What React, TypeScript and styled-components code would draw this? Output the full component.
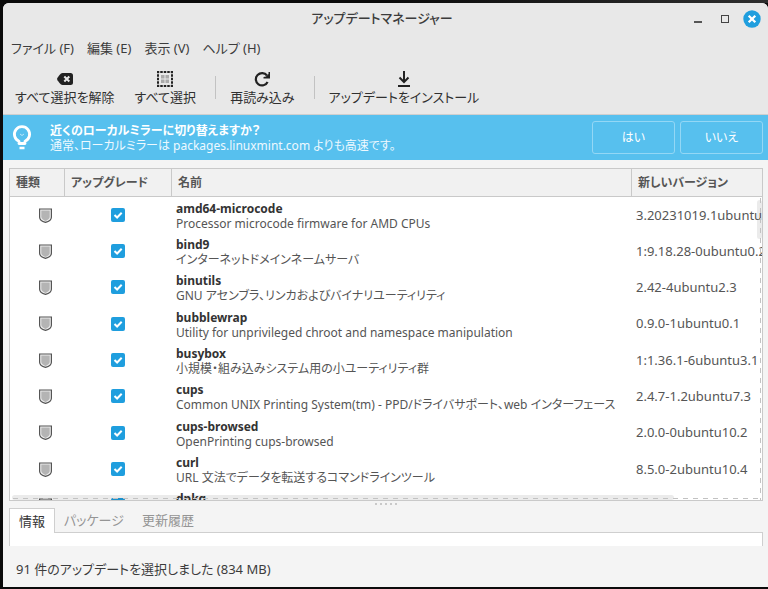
import React, { useState } from "react";
import styled, { createGlobalStyle, css } from "styled-components";

const GlobalStyle = createGlobalStyle`
  * { box-sizing: border-box; }
  body {
    margin: 0;
    background: #0d0d0d;
    color: #3c3c3c;
    font-family: "Noto Sans", "Noto Sans CJK JP", sans-serif;
    font-size: 12px;
    line-height: 15px;
    font-feature-settings: "palt";
  }
  button { font: inherit; font-feature-settings: inherit; color: inherit; border: 0; padding: 0; background: none; }
`;

const Desktop = styled.div`
  height: 100vh;
  padding: 3px 0 2px 3px;
  background: linear-gradient(90deg, #0b0b0b 50%, #2e2e2e) top / 100% 3px no-repeat, #0b0b0b;
`;
const Window = styled.main`
  height: 100%;
  display: flex;
  flex-direction: column;
  background: #f4f4f4;
  border-radius: 6px 6px 0 0;
  overflow: hidden;
`;
const Chrome = styled.header`
  background: #e8e8e8;
  border-bottom: 1px solid #cfcfcf;
  font-size: 13px;
`;
const TitleBar = styled.div`
  display: grid;
  grid-template-columns: 1fr auto 1fr;
  align-items: center;
  height: 31px;
  padding-right: 7px;
`;
const Title = styled.h1`
  grid-column: 2;
  margin: 0;
  font-size: 13px;
  font-weight: 500;
`;
const WindowControls = styled.div`
  display: flex;
  justify-content: flex-end;
  gap: 9px;
`;
const ControlButton = styled.button`
  width: 18px;
  height: 18px;
  svg { display: block; }
`;
const MenuBar = styled.nav`
  display: flex;
  gap: 13px;
  height: 28px;
  align-items: center;
  padding-left: 8px;
`;
const MenuItem = styled.button`white-space: nowrap;`;
const ToolBar = styled.div`
  display: flex;
  align-items: center;
  height: 52px;
  padding: 0 12px 1px;
`;
const ToolButton = styled.button<{ $spaced?: boolean }>`
  display: flex;
  flex-direction: column;
  align-items: center;
  gap: 3px;
  color: #303030;
  white-space: nowrap;
  margin-left: ${(p) => (p.$spaced ? "20px" : "0")};
`;
const Separator = styled.span`
  width: 1px;
  height: 23px;
  margin: 0 14px 0 19px;
  background: #c2c2c2;
`;
const InfoBar = styled.section`
  display: flex;
  align-items: center;
  height: 45px;
  flex: none;
  padding: 0 5px 0 9px;
  background: #57c0ee;
  color: #fff;
`;
const InfoText = styled.div`
  flex: 1;
  margin-left: 16px;
  color: #eef9ff;
  white-space: nowrap;
  strong { display: block; color: #fff; }
`;
const InfoButton = styled.button`
  width: 83px;
  height: 33px;
  margin-left: 5px;
  border: 1px solid #93d7f5;
  border-radius: 3px;
`;
const Content = styled.div`
  flex: 1;
  min-height: 0;
  display: flex;
  flex-direction: column;
  padding: 8px 5px 0 6px;
`;
const ListFrame = styled.div`
  position: relative;
  flex: 1;
  min-height: 0;
  overflow: hidden;
  border: 1px solid #c9c9c9;
  background: #fff;
`;
const Table = styled.table`
  width: 100%;
  table-layout: fixed;
  border-collapse: separate;
  border-spacing: 0;
`;
const HeadCell = styled.th<{ $width?: string }>`
  width: ${(p) => p.$width ?? "auto"};
  height: 28px;
  padding: 0 6px;
  background: #f1f1f1;
  border-bottom: 1px solid #c9c9c9;
  text-align: left;
  color: #555;
  & + & { border-left: 1px solid #c9c9c9; }
`;
const Row = styled.tr<{ $tall?: boolean }>`
  height: ${(p) => (p.$tall ? "37px" : "36px")};
`;
const Cell = styled.td`
  padding: 2px 0 0 5px;
  overflow: hidden;
  white-space: nowrap;
  vertical-align: middle;
`;
const IconCell = styled(Cell)`
  padding: 0;
  svg { display: block; margin-left: 29px; }
`;
const VersionCell = styled(Cell)`
  padding-top: 0;
  font-size: 13px;
`;
const PackageName = styled.strong`
  display: block;
  color: #333;
`;
const Summary = styled.span`
  display: block;
  color: #555;
`;
const Check = styled.input`
  appearance: none;
  display: block;
  width: 14px;
  height: 14px;
  margin: 0 auto;
  border-radius: 2px;
  border: 1px solid #aaa;
  background: #fff;
  &:checked {
    border: 0;
    background: #1f9ede url("data:image/svg+xml,%3Csvg xmlns='http://www.w3.org/2000/svg' viewBox='0 0 14 14'%3E%3Cpath d='M3.5 7l2.6 2.5 4.6-4.7' fill='none' stroke='white' stroke-width='2'/%3E%3C/svg%3E");
  }
`;
const HorizontalBar = styled.div`
  position: absolute;
  left: 2px;
  bottom: 0;
  width: 88%;
  height: 5px;
  border-radius: 3px;
  background: rgba(0, 0, 0, 0.08);
`;
const VerticalBar = styled.div`
  position: absolute;
  right: 0;
  top: 31px;
  width: 5px;
  height: 39px;
  border-radius: 3px;
  background: rgba(0, 0, 0, 0.08);
`;
const BottomDashes = styled.div`
  position: absolute;
  left: 3px;
  right: 0;
  bottom: 1px;
  height: 1px;
  background: repeating-linear-gradient(90deg, #c2c2c2 0 5px, transparent 5px 10px);
`;
const RightDashes = styled.div`
  position: absolute;
  right: 1px;
  top: 29px;
  bottom: 0;
  width: 1px;
  background: repeating-linear-gradient(180deg, #c2c2c2 0 5px, transparent 5px 10px);
`;
const Grip = styled.div`
  display: flex;
  justify-content: center;
  gap: 3px;
  height: 7px;
  padding-top: 2px;
  i { width: 2px; height: 2px; background: #c9c9c9; }
`;
const Tabs = styled.div`
  display: flex;
  height: 24px;
  position: relative;
  z-index: 1;
  font-size: 13px;
`;
const Tab = styled.button<{ $active?: boolean }>`
  padding: 0 9px;
  color: #959595;
  white-space: nowrap;
  ${(p) =>
    p.$active &&
    css`
      height: 25px;
      background: #fff;
      border: 1px solid #cfcfcf;
      border-bottom: 0;
      color: #333;
    `}
`;
const TabPanel = styled.div`
  height: 14px;
  background: #fff;
  border: 1px solid #cfcfcf;
  border-bottom: 0;
`;
const StatusBar = styled.footer`
  height: 41px;
  padding: 16px 13px 0;
  font-size: 13px;
`;

const Shield = () => (
  <svg width="13" height="15" viewBox="0 0 13 15">
    <path d="M.6 1h11.800v8.200c0 2.900-3.200 4.400-5.900 5.200C3.800 13.600.6 12.100.6 9.200z" fill="#eee" stroke="#555" strokeWidth="1.200" />
    <path d="M2.300 2.600h8.400v6.500c0 1.900-2.200 3.100-4.200 3.800-2-.7-4.200-1.900-4.200-3.800z" fill="#b4b4b4" />
  </svg>
);
const Bulb = () => (
  <svg width="22" height="25" viewBox="0 0 22 25" fill="none" stroke="#fff">
    <path d="M7 18.500v-2.300A7.600 7.600 0 1 1 13 16.200v2.300z" strokeWidth="2.800" strokeLinejoin="round" />
    <path d="M8 9l2 1.500L12 9" strokeWidth="1" opacity=".6" />
    <path d="M7.500 23h5" strokeWidth="2.500" />
  </svg>
);
const ClearIcon = () => (
  <svg width="16" height="16" viewBox="0 0 16 16">
    <path d="M5.500 2H13.500Q16 2 16 4.500v7q0 2.500-2.500 2.500H5.500Q4 14 2.500 12L.5 9.200Q-.3 8 .5 6.800L2.500 4Q4 2 5.500 2z" fill="#222" />
    <path d="M7.300 5.500l5 5m0-5l-5 5" stroke="#e8e8e8" strokeWidth="2" />
  </svg>
);
const SelectIcon = () => (
  <svg width="16" height="16" viewBox="0 0 16 16">
    <rect x="1" y="1" width="14" height="14" fill="none" stroke="#222" strokeWidth="2" strokeDasharray="2.500 1" strokeDashoffset="1.250" />
    <path d="M4 4h3.500v3.500H4zM8.500 4H12v3.500H8.500zM4 8.500h3.500V12H4zM8.500 8.500H12V12H8.500z" fill="#aaa" />
  </svg>
);
const ReloadIcon = () => (
  <svg width="16" height="16" viewBox="0 0 16 16" fill="none" stroke="#222" strokeWidth="2.200">
    <path d="M13 4.500A6.200 6.200 0 1 0 13.600 11" />
    <path d="M16 1v6.500H9.500V6L12 5.500 14.500 3V1z" fill="#222" stroke="none" />
  </svg>
);
const InstallIcon = () => (
  <svg width="16" height="16" viewBox="0 0 16 16" fill="none" stroke="#222" strokeWidth="2">
    <path d="M8 0v11M3.500 6.500l4.500 4.500 4.500-4.500M2 15h12" />
  </svg>
);

const packages = [
  { name: "amd64-microcode", summary: "Processor microcode firmware for AMD CPUs", version: "3.20231019.1ubuntu2.1" },
  { name: "bind9", summary: "インターネットドメインネームサーバ", version: "1:9.18.28-0ubuntu0.24.04.1" },
  { name: "binutils", summary: "GNU アセンブラ、リンカおよびバイナリユーティリティ", version: "2.42-4ubuntu2.3" },
  { name: "bubblewrap", summary: "Utility for unprivileged chroot and namespace manipulation", version: "0.9.0-1ubuntu0.1", tall: true },
  { name: "busybox", summary: "小規模・組み込みシステム用の小ユーティリティ群", version: "1:1.36.1-6ubuntu3.1" },
  { name: "cups", summary: "Common UNIX Printing System(tm) - PPD/ドライバサポート、web インターフェース", version: "2.4.7-1.2ubuntu7.3" },
  { name: "cups-browsed", summary: "OpenPrinting cups-browsed", version: "2.0.0-0ubuntu10.2", tall: true },
  { name: "curl", summary: "URL 文法でデータを転送するコマンドラインツール", version: "8.5.0-2ubuntu10.4" },
  { name: "dpkg", summary: "", version: "" },
];
const menus = ["ファイル (F)", "編集 (E)", "表示 (V)", "ヘルプ (H)"];
const tabs = ["情報", "パッケージ", "更新履歴"];

export default function App() {
  const [tab, setTab] = useState(0);
  return (
    <>
      <GlobalStyle />
      <Desktop>
        <Window>
          <Chrome>
            <TitleBar>
              <Title>アップデートマネージャー</Title>
              <WindowControls>
                <ControlButton aria-label="最小化">
                  <svg width="18" height="18"><path d="M5 12h8" stroke="#555" strokeWidth="2" /></svg>
                </ControlButton>
                <ControlButton aria-label="最大化">
                  <svg width="18" height="18"><rect x="5.500" y="5.500" width="7" height="7" fill="none" stroke="#444" /></svg>
                </ControlButton>
                <ControlButton aria-label="閉じる">
                  <svg width="18" height="18">
                    <circle cx="9" cy="9" r="8.700" fill="#1f9ede" />
                    <path d="M5.700 5.700l6.600 6.600m0-6.600l-6.600 6.600" stroke="#fff" strokeWidth="2.300" />
                  </svg>
                </ControlButton>
              </WindowControls>
            </TitleBar>
            <MenuBar>{menus.map((m) => <MenuItem key={m}>{m}</MenuItem>)}</MenuBar>
            <ToolBar>
              <ToolButton><ClearIcon />すべて選択を解除</ToolButton>
              <ToolButton $spaced><SelectIcon />すべて選択</ToolButton>
              <Separator />
              <ToolButton><ReloadIcon />再読み込み</ToolButton>
              <Separator />
              <ToolButton><InstallIcon />アップデートをインストール</ToolButton>
            </ToolBar>
          </Chrome>
          <InfoBar>
            <Bulb />
            <InfoText>
              <strong>近くのローカルミラーに切り替えますか？</strong>
              通常、ローカルミラーは packages.linuxmint.com よりも高速です。
            </InfoText>
            <InfoButton>はい</InfoButton>
            <InfoButton>いいえ</InfoButton>
          </InfoBar>
          <Content>
            <ListFrame>
              <Table>
                <thead>
                  <tr>
                    <HeadCell $width="54px">種類</HeadCell>
                    <HeadCell $width="107px">アップグレード</HeadCell>
                    <HeadCell>名前</HeadCell>
                    <HeadCell $width="131px">新しいバージョン</HeadCell>
                  </tr>
                </thead>
                <tbody>
                  {packages.map((p) => (
                    <Row key={p.name} $tall={p.tall}>
                      <IconCell><Shield /></IconCell>
                      <IconCell><Check type="checkbox" defaultChecked aria-label={p.name} /></IconCell>
                      <Cell>
                        <PackageName>{p.name}</PackageName>
                        <Summary>{p.summary || "\u00a0"}</Summary>
                      </Cell>
                      <VersionCell><Summary>{p.version}</Summary></VersionCell>
                    </Row>
                  ))}
                </tbody>
              </Table>
              <HorizontalBar />
              <VerticalBar />
              <BottomDashes />
              <RightDashes />
            </ListFrame>
            <Grip><i /><i /><i /><i /><i /></Grip>
            <Tabs role="tablist">
              {tabs.map((t, i) => (
                <Tab key={t} role="tab" aria-selected={tab === i} $active={tab === i} onClick={() => setTab(i)}>{t}</Tab>
              ))}
            </Tabs>
            <TabPanel role="tabpanel" />
          </Content>
          <StatusBar>91 件のアップデートを選択しました (834 MB)</StatusBar>
        </Window>
      </Desktop>
    </>
  );
}
